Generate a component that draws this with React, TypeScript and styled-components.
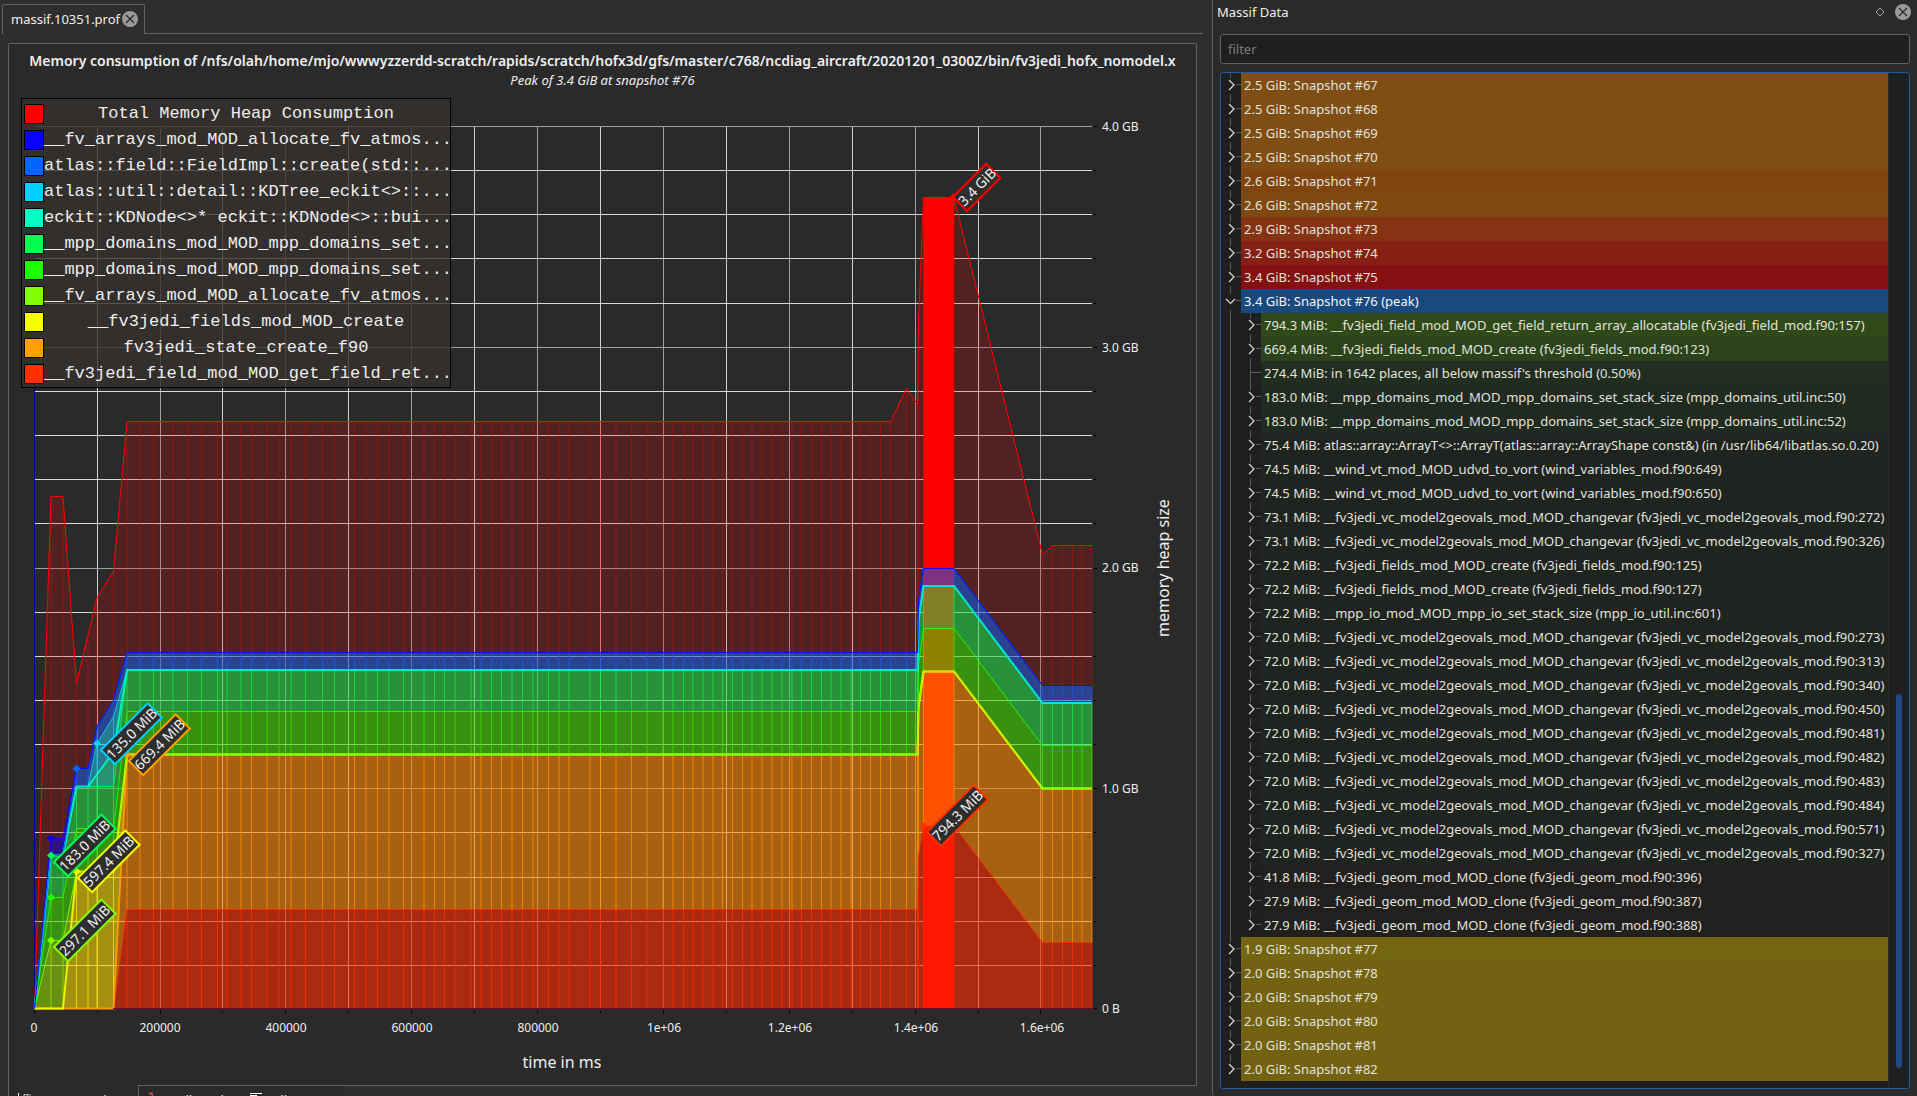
import React from "react";
import styled, { createGlobalStyle } from "styled-components";

const GlobalStyle = createGlobalStyle`
  * { box-sizing: border-box; }
  body {
    margin: 0;
    overflow: hidden;
    background: #2e2e2e;
    color: #eeeeee;
    font-family: "Noto Sans", "Open Sans", sans-serif;
    font-size: 13px;
    line-height: 18px;
  }
  button, input { font: inherit; color: inherit; }
`;

/* ---------- window layout ---------- */

const Window = styled.div`
  display: grid;
  grid-template-columns: minmax(0, 1212fr) minmax(0, 705fr);
  height: 100vh;
  overflow: hidden;
`;

const Workspace = styled.main`
  display: flex;
  flex-direction: column;
  min-width: 0;
  min-height: 0;
`;

const DocumentTabs = styled.nav`
  display: flex;
  margin: 4px 9px 9px 2px;
`;

const DocumentTab = styled.div`
  display: flex;
  align-items: center;
  gap: 2px;
  height: 30px;
  padding: 0 6px 1px 8px;
  border: 1px solid #626262;
  border-bottom: none;
  border-radius: 2px 2px 0 0;
`;

const TabStripRest = styled.div`
  flex: 1;
  border-bottom: 1px solid #626262;
`;

const PlainButton = styled.button`
  display: flex;
  align-items: center;
  padding: 0;
  border: none;
  background: none;
`;

const ChartFrame = styled.section`
  display: flex;
  flex: 1;
  flex-direction: column;
  min-height: 0;
  margin: 0 15px 0 8px;
  padding-top: 7px;
  border: 1px solid #626262;
  border-bottom: none;
  border-radius: 2px 2px 0 0;
  background: #2a2a2a;
`;

const ChartTitle = styled.h1`
  margin: 0;
  font-size: 14px;
  font-weight: 600;
  line-height: 20px;
  text-align: center;
  white-space: nowrap;
`;

const ChartSubtitle = styled.p`
  margin: 0 0 1px;
  font-style: italic;
  text-align: center;
`;

const PlotArea = styled.div`
  position: relative;
  flex: 1;
  min-height: 0;
`;

const Plot = styled.svg`
  display: block;
  width: 100%;
  height: 100%;
`;

const AxisText = styled.text`
  fill: #eeeeee;
  font-size: 12px;
`;

const AxisTitle = styled.text`
  fill: #eeeeee;
  font-size: 16px;
  text-anchor: middle;
`;

const CalloutText = styled.text`
  fill: #f2f2f2;
  font-size: 14px;
`;

/* ---------- legend ---------- */

const Legend = styled.ul`
  position: absolute;
  top: 8px;
  left: 12px;
  width: 430px;
  margin: 0;
  padding: 2px 2px 0;
  border: 1px solid #000000;
  background: rgba(52, 49, 46, 0.8);
  list-style: none;
`;

const LegendRow = styled.li`
  display: flex;
  align-items: center;
  height: 26px;
`;

const Swatch = styled.span<{ $color: string }>`
  flex: none;
  width: 20px;
  height: 20px;
  border: 1px solid #000000;
  background: ${(p) => p.$color};
`;

const LegendLabel = styled.span`
  flex: 1;
  min-width: 0;
  font-family: "Liberation Mono", monospace;
  font-size: 17px;
  line-height: 20px;
  text-align: center;
  white-space: nowrap;
`;

/* ---------- bottom view tabs ---------- */

const ViewTabs = styled.nav`
  display: flex;
  flex: none;
  height: 30px;
  margin: 0 15px -19px 8px;
`;

const ViewTab = styled.button<{ $active?: boolean }>`
  display: flex;
  align-items: flex-start;
  gap: 6px;
  min-width: ${(p) => (p.$active ? 131 : 102)}px;
  padding: ${(p) => (p.$active ? 6 : 5)}px 9px 0;
  border: 0 solid #626262;
  border-width: ${(p) => (p.$active ? "0 1px 0 1px" : "1px 0 0 0")};
  background: #2a2a2a;
`;

const ViewTabsRest = styled.div`
  flex: 1;
  border-top: 1px solid #626262;
`;

/* ---------- data dock ---------- */

const Dock = styled.aside`
  display: flex;
  flex-direction: column;
  min-width: 0;
  min-height: 0;
  padding: 0 7px 7px;
  border-left: 1px solid #626262;
  border-bottom-left-radius: 3px;
  background: #2a2a2a;
`;

const DockHeader = styled.header`
  display: flex;
  align-items: center;
  gap: 10px;
  height: 24px;
  margin: 0 -1px 10px -3px;
`;

const DockTitle = styled.h2`
  flex: 1;
  margin: 0;
  font-size: 13px;
  font-weight: 400;
`;

const FilterInput = styled.input`
  height: 30px;
  padding: 0 7px;
  border: 1px solid #626262;
  border-radius: 3px;
  outline: none;
  background: #1f1f1f;
  &::placeholder { color: #7c7c7c; opacity: 1; }
`;

const TreeFrame = styled.div`
  display: flex;
  flex: 1;
  min-height: 0;
  margin-top: 8px;
  border: 1px solid #235a9c;
  border-radius: 3px;
  overflow: hidden;
  background: #1f1f1f;
`;

const Tree = styled.ul`
  flex: 1;
  min-width: 0;
  margin: 0;
  padding: 0;
  border-right: 1px solid #2c2c2c;
  list-style: none;
`;

const TreeRow = styled.li`
  display: flex;
  height: 24px;
`;

const Branch = styled.svg`
  flex: none;
  width: 20px;
  height: 24px;
`;

const ToggleButton = styled(PlainButton)`
  flex: none;
  width: 20px;
  height: 24px;
`;

const Cell = styled.span<{ $bg: string; $selected?: boolean }>`
  flex: 1;
  padding: 1px 3px;
  overflow: hidden;
  background: ${(p) => p.$bg};
  color: ${(p) => (p.$selected ? "#f4f4f4" : "#e2e2dc")};
  line-height: 22px;
  white-space: nowrap;
`;

const ScrollTrack = styled.div`
  display: flex;
  flex-direction: column;
  width: 20px;
  padding: 0 6px 20px 7px;
`;

const ScrollSpace = styled.div`
  flex: 620;
`;

const ScrollThumb = styled.div`
  flex: 374;
  width: 6px;
  border-radius: 3px;
  background: #204a80;
`;

/* ---------- chart data ---------- */

type Point = [number, number];

const BASE = 1008.5;
const LEFT = 34.5;
const RIGHT = 1092;
const PEAK_START = 923.5;
const PEAK_END = 954;

const tail = (plateau: number, step: number, peak: number, end: number): Point[] => [
  [127, plateau],
  [917.5, plateau],
  [918.5, step],
  [PEAK_START, peak],
  [PEAK_END, peak],
  [1042.5, end],
  [RIGHT, end],
];

const total: Point[] = [
  [LEFT, BASE], [51, 496.5], [63, 496.5], [76.5, 683.5], [97, 597.5], [113.5, 571.5],
  [127, 421.5], [890.5, 421.5], [906.5, 388.5], [917.5, 404.5], [918.5, 320],
  [PEAK_START, 197.5], [PEAK_END, 197.5], [1042.5, 555], [1052.5, 545.5], [RIGHT, 545.5],
];

interface Series {
  color: string;
  width: number;
  points: Point[];
}

const upperTail = tail(652.5, 600, 568.5, 685.5);
const cyanTail = tail(670, 620, 586, 703);
const greenTail = tail(711.5, 665, 628.5, 745.5);
const limeTail = tail(754.5, 707, 671.5, 788.5);

const series: Series[] = [
  { color: "#0a00ff", width: 1, points: [[LEFT, BASE], [51, 838.5], [63, 838.5], [76.5, 768.5], [88, 768.5], [97, 726.5], [113.5, 700.5], ...upperTail] },
  { color: "#0064ff", width: 1, points: [[LEFT, BASE], [51, 855.5], [63, 855.5], [76.5, 768.5], [88, 768.5], [97, 726.5], [113.5, 700.5], ...upperTail] },
  { color: "#00d0ff", width: 1, points: [[LEFT, BASE], [51, 855.5], [63, 855.5], [76.5, 786.5], [88, 786.5], [97, 743.5], [113.5, 716.5], ...cyanTail] },
  { color: "#00ffc0", width: 2, points: [[LEFT, BASE], [51, 855.5], [63, 855.5], [76.5, 786.5], [88, 786.5], [97, 774.5], [113.5, 752], ...cyanTail] },
  { color: "#00ff50", width: 1, points: [[LEFT, BASE], [51, 855.5], [63, 855.5], [76.5, 786.5], [113.5, 786.5], ...cyanTail] },
  { color: "#20ff00", width: 1, points: [[LEFT, BASE], [51, 897.5], [63, 897.5], [76.5, 828.5], [113.5, 828.5], ...greenTail] },
  { color: "#80ff00", width: 1, points: [[LEFT, BASE], [51, 940.5], [63, 940.5], [76.5, 871.5], [113.5, 871.5], ...limeTail] },
  { color: "#f5ff00", width: 2, points: [[LEFT, BASE], [63, BASE], [76.5, 871.5], [113.5, 871.5], ...limeTail] },
  { color: "#ffa000", width: 2, points: [[LEFT, BASE], [113.5, BASE], ...limeTail] },
  { color: "#ff3000", width: 1, points: [[LEFT, BASE], [113.5, BASE], ...tail(909.5, 855, 826, 942.5)] },
];

const ground: Point[] = [[LEFT, BASE], [RIGHT, BASE]];

const snapshots = [
  51, 63, 76.5, 88, 97, 113.5, 127, 140, 153.5, 173, 187.5, 201.5, 217.5, 227, 241, 251.5, 267, 279,
  291, 305.5, 322.5, 334.5, 354.5, 366, 377.5, 389, 403.5, 424, 434.5, 444.5, 455, 471, 481, 491.5,
  501.5, 512, 522.5, 533, 548.5, 559, 569, 590, 600.5, 616, 631.5, 647, 663, 673, 683.5, 693, 703,
  713, 722.5, 732.5, 742.5, 752, 762, 772, 782, 792, 801.5, 811.5, 821.5, 831, 841, 851, 860.5,
  870.5, 880.5, 890.5, 906.5, 917.5, 918.5, 923.5, 954, 1042.5, 1052.5, 1062.5, 1072.5, 1082, 1092,
];

const valueAt = (points: Point[], x: number): number => {
  for (let i = 1; i < points.length; i++) {
    const [x0, y0] = points[i - 1];
    const [x1, y1] = points[i];
    if (x <= x1) return y0 + ((y1 - y0) * (x - x0)) / (x1 - x0);
  }
  return points[points.length - 1][1];
};

const toLine = (points: Point[]) => points.map((p) => p.join(",")).join(" ");
const toBand = (top: Point[], bottom: Point[]) => toLine([...top, ...[...bottom].reverse()]);

const horizontalGrid = Array.from({ length: 20 }, (_, i) => ({
  y: Math.round(126 + i * 44.15) + 0.5,
  major: i % 5 === 0,
}));

const verticalGrid = Array.from({ length: 17 }, (_, i) => ({
  x: Math.round(33.7 + i * 62.92) + 0.5,
  major: i % 2 === 0,
}));

const xLabels = ["0", "200000", "400000", "600000", "800000", "1e+06", "1.2e+06", "1.4e+06", "1.6e+06"];
const yLabels = ["4.0 GB", "3.0 GB", "2.0 GB", "1.0 GB", "0 B"];

const markers = [
  { x: 51, y: 838.5, color: "#0a00ff" },
  { x: 51, y: 855.5, color: "#00ff50" },
  { x: 51, y: 897.5, color: "#20ff00" },
  { x: 51, y: 940.5, color: "#80ff00" },
  { x: 76.5, y: 768.5, color: "#0064ff" },
  { x: 97, y: 743.5, color: "#00d0ff" },
  { x: 76.5, y: 871.5, color: "#f5ff00" },
  { x: 127, y: 754.5, color: "#ffa000" },
  { x: 923.5, y: 826, color: "#ff3000" },
  { x: 953, y: 197.5, color: "#ff0000" },
];

const callouts = [
  { x: 953, y: 197, length: 47, text: "3.4 GiB", color: "#ff0000" },
  { x: 54, y: 862, length: 67, text: "183.0 MiB", color: "#00ff50" },
  { x: 78, y: 878, length: 67, text: "597.4 MiB", color: "#f5ff00" },
  { x: 54, y: 947, length: 67, text: "297.1 MiB", color: "#80ff00" },
  { x: 101, y: 750, length: 66, text: "135.0 MiB", color: "#00d0ff" },
  { x: 129, y: 761, length: 66, text: "669.4 MiB", color: "#ffa000" },
  { x: 927, y: 832, length: 66, text: "794.3 MiB", color: "#ff3000" },
];

const legend = [
  { color: "#ff0000", label: "Total Memory Heap Consumption" },
  { color: "#0a00ff", label: "__fv_arrays_mod_MOD_allocate_fv_atmos..." },
  { color: "#0064ff", label: "atlas::field::FieldImpl::create(std::..." },
  { color: "#00d0ff", label: "atlas::util::detail::KDTree_eckit<>::..." },
  { color: "#00ffc0", label: "eckit::KDNode<>* eckit::KDNode<>::bui..." },
  { color: "#00ff50", label: "__mpp_domains_mod_MOD_mpp_domains_set..." },
  { color: "#20ff00", label: "__mpp_domains_mod_MOD_mpp_domains_set..." },
  { color: "#80ff00", label: "__fv_arrays_mod_MOD_allocate_fv_atmos..." },
  { color: "#f5ff00", label: "__fv3jedi_fields_mod_MOD_create" },
  { color: "#ffa000", label: "fv3jedi_state_create_f90" },
  { color: "#ff3000", label: "__fv3jedi_field_mod_MOD_get_field_ret..." },
];

/* ---------- tree data ---------- */

interface Row {
  text: string;
  bg: string;
  child?: boolean;
  leaf?: boolean;
  open?: boolean;
  last?: boolean;
}

const snap = (size: string, id: number, bg: string): Row => ({ text: `${size} GiB: Snapshot #${id}`, bg });
const alloc = (text: string, bg: string): Row => ({ text, bg, child: true });
const geovals = (size: string, line: number): Row =>
  alloc(`${size} MiB: __fv3jedi_vc_model2geovals_mod_MOD_changevar (fv3jedi_vc_model2geovals_mod.f90:${line})`, "#1f2420");

const rows: Row[] = [
  snap("2.5", 67, "#7f4e14"),
  snap("2.5", 68, "#7f4e14"),
  snap("2.5", 69, "#7f4e14"),
  snap("2.5", 70, "#7f4e14"),
  snap("2.6", 71, "#80450f"),
  snap("2.6", 72, "#7f4a12"),
  snap("2.9", 73, "#863313"),
  snap("3.2", 74, "#862013"),
  snap("3.4", 75, "#851011"),
  { text: "3.4 GiB: Snapshot #76 (peak)", bg: "#184a80", open: true },
  alloc("794.3 MiB: __fv3jedi_field_mod_MOD_get_field_return_array_allocatable (fv3jedi_field_mod.f90:157)", "#2f4918"),
  alloc("669.4 MiB: __fv3jedi_fields_mod_MOD_create (fv3jedi_fields_mod.f90:123)", "#2b421a"),
  { ...alloc("274.4 MiB: in 1642 places, all below massif's threshold (0.50%)", "#212e1f"), leaf: true },
  alloc("183.0 MiB: __mpp_domains_mod_MOD_mpp_domains_set_stack_size (mpp_domains_util.inc:50)", "#1f2a20"),
  alloc("183.0 MiB: __mpp_domains_mod_MOD_mpp_domains_set_stack_size (mpp_domains_util.inc:52)", "#1f2a20"),
  alloc("75.4 MiB: atlas::array::ArrayT<>::ArrayT(atlas::array::ArrayShape const&) (in /usr/lib64/libatlas.so.0.20)", "#1f2420"),
  alloc("74.5 MiB: __wind_vt_mod_MOD_udvd_to_vort (wind_variables_mod.f90:649)", "#1f2420"),
  alloc("74.5 MiB: __wind_vt_mod_MOD_udvd_to_vort (wind_variables_mod.f90:650)", "#1f2420"),
  geovals("73.1", 272),
  geovals("73.1", 326),
  alloc("72.2 MiB: __fv3jedi_fields_mod_MOD_create (fv3jedi_fields_mod.f90:125)", "#1f2420"),
  alloc("72.2 MiB: __fv3jedi_fields_mod_MOD_create (fv3jedi_fields_mod.f90:127)", "#1f2420"),
  alloc("72.2 MiB: __mpp_io_mod_MOD_mpp_io_set_stack_size (mpp_io_util.inc:601)", "#1f2420"),
  ...[273, 313, 340, 450, 481, 482, 483, 484, 571, 327].map((line) => geovals("72.0", line)),
  alloc("41.8 MiB: __fv3jedi_geom_mod_MOD_clone (fv3jedi_geom_mod.f90:396)", "#21201e"),
  alloc("27.9 MiB: __fv3jedi_geom_mod_MOD_clone (fv3jedi_geom_mod.f90:387)", "#21201e"),
  { ...alloc("27.9 MiB: __fv3jedi_geom_mod_MOD_clone (fv3jedi_geom_mod.f90:388)", "#21201e"), last: true },
  snap("1.9", 77, "#746512"),
  snap("2.0", 78, "#736212"),
  snap("2.0", 79, "#736212"),
  snap("2.0", 80, "#736212"),
  snap("2.0", 81, "#736212"),
  { ...snap("2.0", 82, "#736212"), last: true },
];

/* ---------- pieces ---------- */

const CloseIcon = () => (
  <svg width="16" height="16" viewBox="0 0 16 16" aria-hidden="true">
    <circle cx="8" cy="8" r="8" fill="#9a9a9a" />
    <path d="M4 4L12 12M12 4L4 12" stroke="#2a2a2a" strokeWidth="1.2" />
  </svg>
);

const Guide = () => (
  <Branch viewBox="0 0 20 24" aria-hidden="true">
    <path d="M9.500 0V24" stroke="#585858" />
  </Branch>
);

const Expander = ({ row }: { row: Row }) => {
  if (row.leaf) {
    return (
      <Branch viewBox="0 0 20 24" aria-hidden="true">
        <path d="M9.500 0V24M9.500 11.500H20" stroke="#585858" fill="none" />
      </Branch>
    );
  }
  return (
    <ToggleButton type="button" aria-label={row.open ? "Collapse" : "Expand"}>
      <Branch viewBox="0 0 20 24">
        <path d={`M9.500 0V5${row.last ? "" : "M9.500 21V24"}M15 11.500H20`} stroke="#585858" />
        <path
          d={row.open ? "M5 10L9.500 14.500L14 10" : "M8 7L13 12L8 17"}
          stroke="#dcdcdc"
          strokeWidth="1.200"
          fill="none"
        />
      </Branch>
    </ToggleButton>
  );
};

const HeapChart = () => (
  <Plot viewBox="9 90 1187 995" role="img" aria-label="Memory heap size over time">
    {verticalGrid.map((g) => (
      <path key={g.x} d={`M${g.x} 126V1008`} stroke={g.major ? "#a0a0a0" : "#cfcfcf"} />
    ))}
    {horizontalGrid.map((g) => (
      <path key={g.y} d={`M${LEFT} ${g.y}H${RIGHT}`} stroke={g.major ? "#a0a0a0" : "#d8d8d8"} />
    ))}
    <path d={`M${LEFT} 126V${BASE}`} stroke="#000090" />

    <polygon points={toBand(total, ground)} fill="#ff0000" fillOpacity="0.19" />
    {snapshots.map((x) => (
      <path key={x} d={`M${x} ${valueAt(total, x)}V${BASE}`} stroke="#ff0000" strokeOpacity="0.34" />
    ))}
    <rect x={PEAK_START} y="197" width={PEAK_END - PEAK_START} height={BASE - 197} fill="#ff0000" />
    <polyline points={toLine(total)} fill="none" stroke="#ff0000" />

    {series.map((s, i) => {
      const below = i + 1 < series.length ? series[i + 1].points : ground;
      return (
        <g key={s.color}>
          <polygon points={toBand(s.points, below)} fill={s.color} fillOpacity="0.5" />
          {snapshots.map((x) => {
            const top = valueAt(s.points, x);
            const bottom = valueAt(below, x);
            return bottom - top > 1 ? (
              <path key={x} d={`M${x} ${top}V${bottom}`} stroke={s.color} strokeOpacity="0.65" />
            ) : null;
          })}
        </g>
      );
    })}
    {[...series].reverse().map((s) => (
      <polyline key={s.color} points={toLine(s.points)} fill="none" stroke={s.color} strokeWidth={s.width} strokeOpacity="0.9" />
    ))}
    <path d={`M113 ${BASE}H${RIGHT}`} stroke="#7a0030" />

    {markers.map((m) => (
      <path key={`${m.x}-${m.y}`} d={`M${m.x - 4} ${m.y}l4 -4l4 4l-4 4z`} fill={m.color} />
    ))}

    {verticalGrid.map((g) => (
      <path key={g.x} d={`M${g.x} 1011v${g.major ? 3 : 2}`} stroke="#000000" />
    ))}
    {[...horizontalGrid, { y: BASE, major: true }].map((g) => (
      <path key={g.y} d={`M1094 ${g.y}h${g.major ? 3 : 2}`} stroke="#000000" />
    ))}

    {xLabels.map((label, i) => (
      <AxisText key={label} x={34 + i * 126} y="1032" textAnchor="middle">{label}</AxisText>
    ))}
    {yLabels.map((label, i) => (
      <AxisText key={label} x="1102" y={131 + Math.round(i * 220.6)}>{label}</AxisText>
    ))}
    <AxisTitle x="562" y="1068">time in ms</AxisTitle>
    <AxisTitle transform="translate(1169 568) rotate(-90)">memory heap size</AxisTitle>

    {callouts.map((c) => (
      <g key={c.text} transform={`translate(${c.x} ${c.y}) rotate(-45)`}>
        <rect width={c.length} height="20" fill="#2e2e2e" stroke={c.color} strokeWidth="2" />
        <CalloutText x="1" y="15">{c.text}</CalloutText>
      </g>
    ))}
  </Plot>
);

const App = () => (
  <>
    <GlobalStyle />
    <Window>
      <Workspace>
        <DocumentTabs aria-label="Open files">
          <DocumentTab>
            <span>massif.10351.prof</span>
            <PlainButton type="button" aria-label="Close massif.10351.prof"><CloseIcon /></PlainButton>
          </DocumentTab>
          <TabStripRest />
        </DocumentTabs>

        <ChartFrame>
          <ChartTitle>
            Memory consumption of /nfs/olah/home/mjo/wwwyzzerdd-scratch/rapids/scratch/hofx3d/gfs/master/c768/ncdiag_aircraft/20201201_0300Z/bin/fv3jedi_hofx_nomodel.x
          </ChartTitle>
          <ChartSubtitle>Peak of 3.4 GiB at snapshot #76</ChartSubtitle>
          <PlotArea>
            <HeapChart />
            <Legend>
              {legend.map((item) => (
                <LegendRow key={item.color}>
                  <Swatch $color={item.color} />
                  <LegendLabel>{item.label}</LegendLabel>
                </LegendRow>
              ))}
            </Legend>
          </PlotArea>
        </ChartFrame>

        <ViewTabs aria-label="Views">
          <ViewTab type="button" $active>
            <svg width="16" height="16" viewBox="0 0 16 16" aria-hidden="true">
              <path d="M0.500 2V15.500H15" stroke="#ffffff" fill="none" />
              <path d="M6 3.500H12M6 3.500V12M9 3.500V12M12 3.500V12" stroke="#cfcfcf" strokeDasharray="2 1" fill="none" />
            </svg>
            Consumption
          </ViewTab>
          <ViewTab type="button">
            <svg width="16" height="16" viewBox="0 0 16 16" aria-hidden="true">
              <path d="M1 2.500H5" stroke="#d04040" strokeWidth="2" />
              <path d="M3 3L8 8L13 13" stroke="#8a8a8a" fill="none" />
            </svg>
            Callgraph
          </ViewTab>
          <ViewTab type="button">
            <svg width="16" height="16" viewBox="0 0 16 16" aria-hidden="true">
              <path d="M0 2.500H12M0 4.500H7M0 8.500H12M0 11.500H7" stroke="#ffffff" />
            </svg>
            Allocators
          </ViewTab>
          <ViewTabsRest />
        </ViewTabs>
      </Workspace>

      <Dock>
        <DockHeader>
          <DockTitle>Massif Data</DockTitle>
          <PlainButton type="button" aria-label="Float panel">
            <svg width="10" height="10" viewBox="0 0 10 10" aria-hidden="true">
              <path d="M5 1L9 5L5 9L1 5Z" stroke="#a8a8a8" fill="none" />
            </svg>
          </PlainButton>
          <PlainButton type="button" aria-label="Close panel"><CloseIcon /></PlainButton>
        </DockHeader>
        <FilterInput type="text" placeholder="filter" aria-label="filter" />
        <TreeFrame>
          <Tree aria-label="Snapshots">
            {rows.map((row) => (
              <TreeRow key={row.text}>
                {row.child && <Guide />}
                <Expander row={row} />
                <Cell $bg={row.bg} $selected={row.open}>{row.text}</Cell>
              </TreeRow>
            ))}
          </Tree>
          <ScrollTrack>
            <ScrollSpace />
            <ScrollThumb />
          </ScrollTrack>
        </TreeFrame>
      </Dock>
    </Window>
  </>
);

export default App;
